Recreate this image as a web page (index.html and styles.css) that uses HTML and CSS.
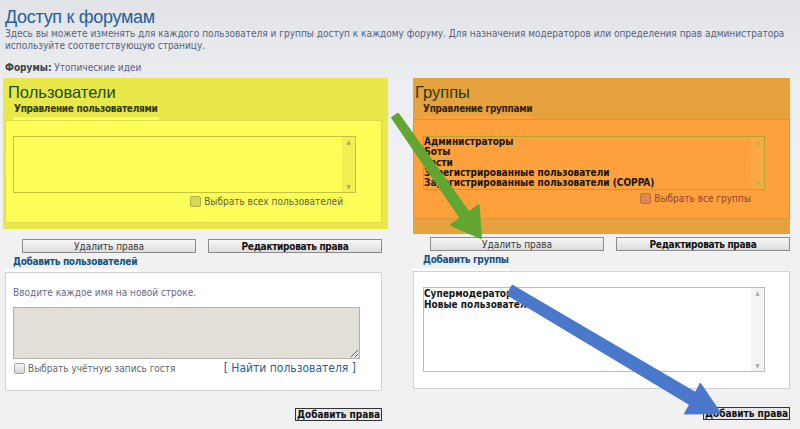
FILE: index.html
```html
<!DOCTYPE html>
<html lang="ru">
  <head>
    <meta charset="UTF-8" />
    <title>Доступ к форумам</title>
    <link rel="stylesheet" href="styles.css">
  </head>

  <body>
    <div class="page">
      <h1>Доступ к форумам</h1>
      <p class="lead">Здесь вы можете изменять для каждого пользователя и группы доступ к каждому форуму. Для назначения модераторов или определения прав администратора<br>используйте соответствующую страницу.</p>
      <p class="forum"><b>Форумы:</b> Утопические идеи</p>

      <div class="cols">
        <!-- users -->
        <div class="col col-users">
          <div class="panel panel-yellow">
            <h2>Пользователи</h2>
            <div class="legend">Управление пользователями</div>
            <div class="box">
              <div class="select">
                <div class="options"></div>
                <div class="scroll"><span>▲</span><span>▼</span></div>
              </div>
              <div class="check"><span class="cb"></span>Выбрать всех пользователей</div>
            </div>
          </div>
          <div class="btn-row">
            <button class="btn">Удалить права</button>
            <button class="btn btn-bold">Редактировать права</button>
          </div>
          <div class="legend legend-blue">Добавить пользователей</div>
          <div class="white-box">
            <p class="hint">Вводите каждое имя на новой строке.</p>
            <textarea class="names"></textarea>
            <div class="guest-row">
              <div class="check"><span class="cb"></span>Выбрать учётную запись гостя</div>
              <a class="find">[ Найти пользователя ]</a>
            </div>
          </div>
          <div class="submit-row"><button class="submit">Добавить права</button></div>
        </div>

        <!-- groups -->
        <div class="col col-groups">
          <div class="panel panel-orange">
            <h2>Группы</h2>
            <div class="legend">Управление группами</div>
            <div class="box">
              <div class="select">
                <div class="options">
                  <div>Администраторы</div>
                  <div>Боты</div>
                  <div>Гости</div>
                  <div>Зарегистрированные пользователи</div>
                  <div>Зарегистрированные пользователи (COPPA)</div>
                </div>
                <div class="scroll"><span>▲</span><span>▼</span></div>
              </div>
              <div class="check"><span class="cb"></span>Выбрать все группы</div>
            </div>
          </div>
          <div class="btn-row">
            <button class="btn">Удалить права</button>
            <button class="btn btn-bold">Редактировать права</button>
          </div>
          <div class="legend legend-blue">Добавить группы</div>
          <div class="white-box">
            <div class="select">
              <div class="options">
                <div>Супермодераторы</div>
                <div>Новые пользователи</div>
              </div>
              <div class="scroll"><span>▲</span><span>▼</span></div>
            </div>
          </div>
          <div class="submit-row"><button class="submit">Добавить права</button></div>
        </div>
      </div>

      <svg class="arrows" width="800" height="429" viewBox="0 0 800 429">
        <polygon class="arrow-green" points="392.1,117.8 460.7,218.1 451.0,225.0 481,238 478.6,205.3 468.9,212.3 397.9,113.7" />
        <polygon class="arrow-blue" points="507.5,294.5 690.3,404.4 685.1,413.6 720,413 700.3,384.1 695.6,393.2 512.5,285.8" />
      </svg>
    </div>
  </body>
</html>
```

FILE: styles.css
```css
body {
  margin: 0;
  background: linear-gradient(#e1e3e7, #eceef0 90px, #f1f1f1 200px);
  font-family: "DejaVu Sans Condensed", "DejaVu Sans", sans-serif;
  font-size: 10px;
  color: #536482;
}

.page {
  position: relative;
  height: 429px;
  padding-left: 5px;
  overflow: hidden;
}

h1 {
  margin: 0;
  padding-top: 6px;
  font: 18px/22px "Liberation Sans", sans-serif;
  letter-spacing: -0.3px;
  color: #23609f;
}

.lead {
  margin: 0;
  line-height: 12px;
  white-space: nowrap;
}

.forum {
  margin: 10px 0 0;
  line-height: 12px;
}

.forum b {
  color: #404040;
}

.cols {
  display: flex;
  gap: 31px;
  margin-top: 4px;
}

.col {
  width: 377px;
}

/* highlighted panels */
.panel h2 {
  margin: 0;
  padding: 4px 0 0 5px;
  font: normal 16.5px/20px "Liberation Sans", sans-serif;
  color: #1c4c12;
}

.legend {
  width: max-content;
  font-weight: bold;
  line-height: 11px;
  letter-spacing: -0.3px;
  padding: 1px 1px 6px 1px;
}

.panel-yellow {
  margin-left: -2px;
  width: 385px;
  height: 151px;
  background: #e9e84a;
}

.panel-yellow .legend {
  margin-left: 10px;
  color: #2d3a10;
  background: linear-gradient(transparent 15px, #fdfd58 15px);
}

.panel-yellow .box {
  margin-left: 2px;
  width: 375px;
  height: 101px;
  border: 1px solid #dcdb4c;
  background: #fefe58;
}

.panel-yellow .select {
  margin: 15px 0 0 7px;
  width: 341px;
  height: 55px;
  border-color: #c5c23a;
}

.panel-yellow .scroll {
  background: #f1f052;
  color: #a8a65a;
}

.panel-yellow .check {
  color: #5d6040;
}

.panel-yellow .cb {
  background: #d8d656;
  border-color: #b0ae48;
}

.panel-orange {
  width: 377px;
  height: 156px;
  background: #e6a23f;
}

.panel-orange h2 {
  padding-left: 2px;
  color: #1f3a14;
}

.panel-orange .legend {
  margin-left: 9px;
  padding-bottom: 5px;
  color: #33240c;
  background: linear-gradient(transparent 14px, #fea03c 14px);
}

.panel-orange .box {
  width: 375px;
  height: 98px;
  border: 1px solid #dc9436;
  background: #fea03c;
}

.panel-orange .select {
  margin: 16px 0 0 9px;
  width: 340px;
  height: 52px;
  border-color: #b3a52c;
}

.panel-orange .scroll {
  background: #f8a844;
  color: #c4b040;
}

.panel-orange .options {
  line-height: 10.25px;
}

.panel-orange .check {
  color: #8a4438;
}

.panel-orange .cb {
  background: #d88850;
  border-color: #c0703c;
}

/* list boxes */
.select {
  display: flex;
  border: 1px solid #bcbcbc;
}

.options {
  flex: 1;
  font-weight: bold;
  color: #151515;
  line-height: 11px;
}

.scroll {
  width: 13px;
  display: flex;
  flex-direction: column;
  justify-content: space-between;
  align-items: center;
  font-size: 6px;
  line-height: 10px;
  background: #f4f4f4;
  color: #aaa;
}

.check {
  display: flex;
  justify-content: flex-end;
  align-items: center;
  gap: 3px;
  margin-top: 3px;
  padding-right: 38px;
  line-height: 11px;
}

.cb {
  width: 9px;
  height: 9px;
  border: 1px solid #a8a8a8;
  border-radius: 2px;
  background: linear-gradient(#f2f2f2, #d8d8d8);
}

/* buttons */
.btn-row {
  display: flex;
  justify-content: flex-end;
  gap: 12px;
}

.col-users .btn-row {
  margin-top: 10px;
}

.col-groups .btn-row {
  margin-top: 3px;
}

.btn {
  width: 174px;
  height: 14px;
  padding: 0;
  border: 1px solid #8c8c8c;
  background: linear-gradient(#f7f7f7, #dcdcdc);
  font: 10px/11px "DejaVu Sans Condensed", "DejaVu Sans", sans-serif;
  color: #3a3a3a;
}

.btn-bold {
  font-weight: bold;
  letter-spacing: -0.3px;
  color: #111;
}

.legend-blue {
  padding: 3px 1px 4px 8px;
  line-height: 12px;
  color: #105289;
  background: linear-gradient(transparent 16px, #fff 16px);
}

.col-groups .legend-blue {
  padding: 3px 1px 5px 10px;
  background: linear-gradient(transparent 17px, #fff 17px);
}

.white-box {
  border: 1px solid #d2d2d2;
  background: #fff;
}

.col-users .white-box {
  height: 103px;
  padding: 14px 0 0 7px;
}

.col-groups .white-box {
  height: 116px;
}

.col-groups .white-box .select {
  margin: 15px 0 0 9px;
  width: 340px;
  height: 83px;
  background: #fff;
}

.hint {
  margin: 0;
  line-height: 12px;
  color: #66698c;
}

.names {
  display: block;
  box-sizing: border-box;
  margin-top: 8px;
  width: 347px;
  height: 52px;
  border: 1px solid #b6b2aa;
  background: #e2dfd9;
}

.guest-row {
  display: flex;
  justify-content: space-between;
  align-items: center;
  width: 342px;
  margin-top: 3px;
  padding-left: 1px;
  line-height: 13px;
}

.guest-row .check {
  margin: 0;
  padding: 0;
  color: #666;
}

.find {
  font: 12px/13px "DejaVu Sans Condensed", "DejaVu Sans", sans-serif;
  color: #2a5f8f;
}

.submit-row {
  display: flex;
  justify-content: flex-end;
}

.col-users .submit-row {
  margin-top: 17px;
}

.col-groups .submit-row {
  margin-top: 18px;
}

.submit {
  width: 87px;
  height: 13px;
  padding: 0;
  border: 1px solid #333;
  background: #e6e6e6;
  font: bold 10px/11px "DejaVu Sans Condensed", "DejaVu Sans", sans-serif;
  color: #111;
}

/* annotation arrows drawn over the page */
.arrows {
  position: absolute;
  top: 0;
  left: 0;
  pointer-events: none;
}

.arrow-green {
  fill: #62a631;
  stroke: #62a631;
  stroke-width: 2;
  stroke-linejoin: round;
}

.arrow-blue {
  fill: #4a79cb;
  stroke: #4a79cb;
  stroke-width: 2;
  stroke-linejoin: round;
}
```
